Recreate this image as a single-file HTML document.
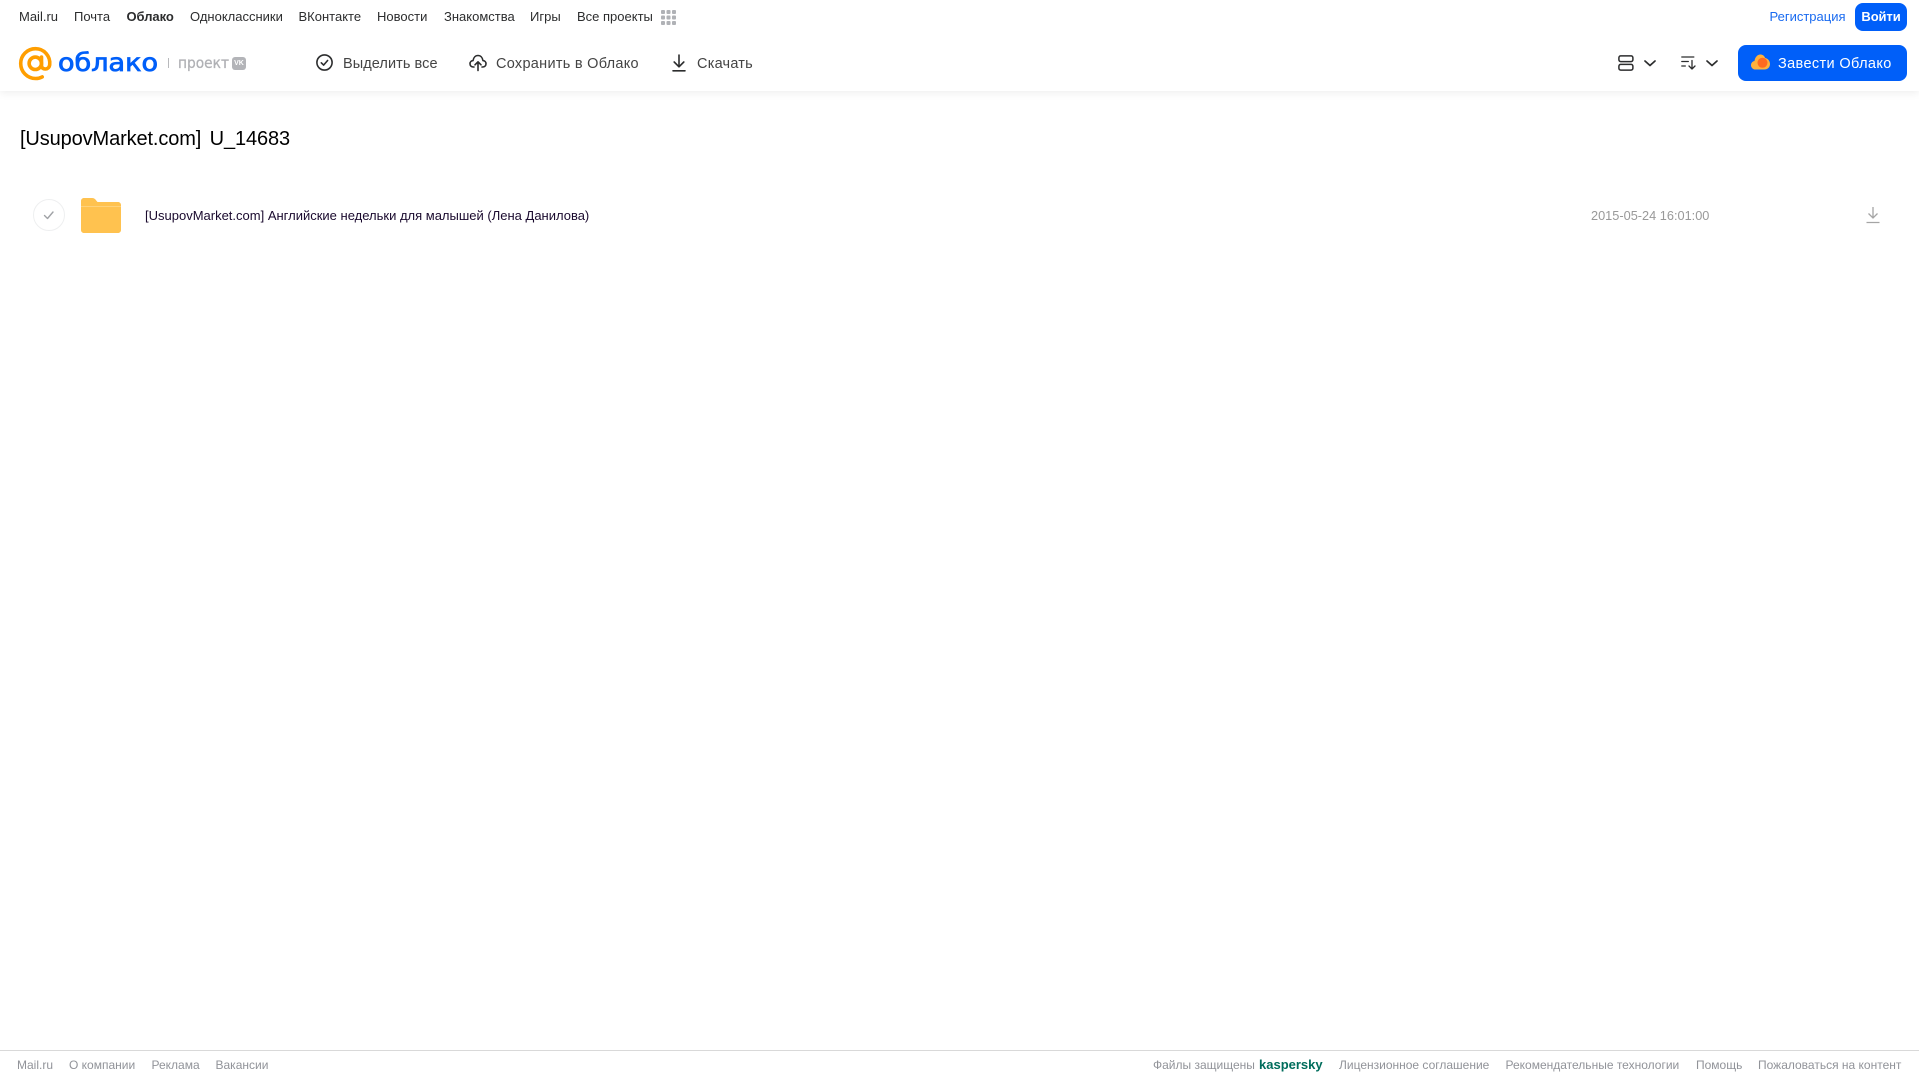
<!DOCTYPE html>
<html lang="ru">
<head>
<meta charset="utf-8">
<title>[UsupovMarket.com] U_14683</title>
<style>
html,body{margin:0;padding:0;background:#fff;}
body{position:relative;width:1919px;height:1079px;overflow:hidden;font-family:"Liberation Sans",sans-serif;}
.t{position:absolute;white-space:nowrap;line-height:20px;}
.n{top:7px;font-size:13px;color:#2c2d2e;}
.a{top:54px;font-size:14.5px;color:#444;letter-spacing:.28px;}
.f{top:1055px;font-size:12px;color:#919399;}
svg{position:absolute;overflow:visible;}
#hdr{position:absolute;left:0;top:0;width:1919px;height:91px;background:#fff;box-shadow:0 2px 8px rgba(0,0,0,.07);}
</style>
</head>
<body>
<div id="hdr"></div>

<span class="t n" style="left:19px">Mail.ru</span>
<span class="t n" style="left:74px">Почта</span>
<span class="t n" style="left:126.500px;font-weight:bold;letter-spacing:-.05px">Облако</span>
<span class="t n" style="left:190px">Одноклассники</span>
<span class="t n" style="left:298.500px">ВКонтакте</span>
<span class="t n" style="left:377px">Новости</span>
<span class="t n" style="left:444px">Знакомства</span>
<span class="t n" style="left:530px">Игры</span>
<span class="t n" style="left:577px">Все проекты</span>
<svg style="left:661px;top:10px" width="15" height="15" fill="#b0b2b6">
<rect x="0" y="0" width="4" height="4" rx="1"/><rect x="5.500" y="0" width="4" height="4" rx="1"/><rect x="11" y="0" width="4" height="4" rx="1"/>
<rect x="0" y="5.500" width="4" height="4" rx="1"/><rect x="5.500" y="5.500" width="4" height="4" rx="1"/><rect x="11" y="5.500" width="4" height="4" rx="1"/>
<rect x="0" y="11" width="4" height="4" rx="1"/><rect x="5.500" y="11" width="4" height="4" rx="1"/><rect x="11" y="11" width="4" height="4" rx="1"/>
</svg>

<span class="t" style="left:1769.500px;top:7px;font-size:13px;color:#1a6bf0">Регистрация</span>
<div style="position:absolute;left:1855px;top:3px;width:52px;height:28px;background:#005ff9;border-radius:8px"></div>
<span class="t" style="left:1855px;top:7px;width:52px;text-align:center;font-size:13px;font-weight:bold;color:#fff;letter-spacing:-.1px">Войти</span>

<!-- logo -->
<svg style="left:19px;top:47px" width="33" height="33" viewBox="0 0 33 33" fill="none">
<circle cx="16.300" cy="16.300" r="6.200" stroke="#ff9e00" stroke-width="3.600"/>
<path d="M22.500 10v8.500c0 4.800 7.600 4.800 8.200 -.8c.9 -8.500 -5.500 -16 -14.200 -16c-8.200 0 -14.800 6.600 -14.800 14.800c0 8.400 6.700 15 14.800 15c2.400 0 4.700 -.5 6.700 -1.600" stroke="#ff9e00" stroke-width="3.600" stroke-linecap="round"/>
</svg>
<svg style="left:57px;top:40px" width="102" height="40">
<text x="1" y="31" font-family="'DejaVu Sans',sans-serif" font-size="24.500" fill="#005ff9" stroke="#005ff9" stroke-width=".8" textLength="100" lengthAdjust="spacingAndGlyphs">облако</text>
</svg>
<div style="position:absolute;left:168px;top:58px;width:1px;height:10px;background:#b8b9bc"></div>
<svg style="left:178px;top:50px" width="54" height="24">
<text x="0" y="18" font-family="'DejaVu Sans',sans-serif" font-size="15.500" fill="#b0b1b5" stroke="#b0b1b5" stroke-width=".3" textLength="51" lengthAdjust="spacingAndGlyphs">проект</text>
</svg>
<div style="position:absolute;left:232px;top:57px;width:14px;height:13px;background:#b3b4b8;border-radius:3px;color:#fff;font-size:7px;line-height:13px;text-align:center;font-weight:bold">VK</div>

<!-- actions -->
<svg style="left:316px;top:54px" width="17" height="17" fill="none" stroke="#2c2d2e" stroke-width="1.600" stroke-linecap="round" stroke-linejoin="round">
<circle cx="8.500" cy="8.500" r="7.600"/><path d="M5.300 8.800l2.300 2.300l4 -4.600"/>
</svg>
<span class="t a" style="left:343px;letter-spacing:.07px">Выделить все</span>
<svg style="left:469px;top:54px" width="18" height="17" fill="none" stroke="#2c2d2e" stroke-width="1.600" stroke-linecap="round" stroke-linejoin="round">
<path d="M5 13H4.300C2.300 13 1 11.500 1 9.800C1 8 2.300 6.700 4 6.600C4.500 3.500 6.500 1.500 9 1.500C11.500 1.500 13.500 3.500 14 6.600C15.700 6.700 17 8 17 9.800C17 11.500 15.700 13 13.700 13H13"/>
<path d="M9 16.500V8M6 10.800L9 7.800L12 10.800"/>
</svg>
<span class="t a" style="left:496px">Сохранить в Облако</span>
<svg style="left:671px;top:54px" width="16" height="18" fill="none" stroke="#2c2d2e" stroke-width="1.600" stroke-linecap="round" stroke-linejoin="round">
<path d="M8 1v11.500M3.200 8l4.800 4.800L12.800 8M2 16.800h12"/>
</svg>
<span class="t a" style="left:697px;letter-spacing:.22px">Скачать</span>

<!-- right toolbar -->
<svg style="left:1618px;top:55px" width="15" height="16" fill="none" stroke="#2c2d2e" stroke-width="1.500">
<rect x=".9" y=".9" width="14" height="5.700" rx="1.800"/><rect x=".9" y="9.400" width="14" height="5.700" rx="1.800"/>
</svg>
<svg style="left:1644px;top:60px" width="12" height="7" fill="none" stroke="#2c2d2e" stroke-width="1.700" stroke-linecap="round" stroke-linejoin="round"><path d="M1 1l5 4.500L11 1"/></svg>
<svg style="left:1681px;top:56px" width="16" height="14" fill="none" stroke="#2c2d2e" stroke-width="1.300" stroke-linecap="round" stroke-linejoin="round">
<path d="M.8 1h12M.8 5.500h6.500M.8 10h3.500M11 4.500v8.500M8 10l3 3l3 -3"/>
</svg>
<svg style="left:1706px;top:60px" width="12" height="7" fill="none" stroke="#2c2d2e" stroke-width="1.700" stroke-linecap="round" stroke-linejoin="round"><path d="M1 1l5 4.500L11 1"/></svg>

<div style="position:absolute;left:1738px;top:45px;width:169px;height:36px;background:#005ff9;border-radius:8px"></div>
<svg style="left:1751px;top:54px" width="19" height="16">
<path d="M4.500 15.500C2 15.500 0 13.600 0 11.200C0 9 1.500 7.300 3.500 7C4 3.200 6.500 .5 9.300 .5C11.500 .5 13.300 1.800 14.200 4C16.800 4.500 19 6.800 19 10C19 13.300 16.500 15.500 13.500 15.500Z" fill="#ffb13d"/>
<circle cx="11.500" cy="8.800" r="5" fill="#ff6a1f"/>
</svg>
<span class="t" style="left:1778px;top:54px;font-size:14.500px;color:#fff;letter-spacing:.37px">Завести Облако</span>

<!-- content -->
<span class="t" style="left:20px;top:127px;font-size:20px;line-height:24px;color:#000;word-spacing:3px;letter-spacing:-.12px">[UsupovMarket.com] U_14683</span>

<svg style="left:33px;top:199px" width="32" height="32" fill="none">
<circle cx="16" cy="16" r="15.500" stroke="#eeeff0"/>
<path d="M11.500 16.500l3 3l5.500 -6.500" stroke="#a0a2a6" stroke-width="1.400" stroke-linecap="round" stroke-linejoin="round"/>
</svg>
<svg style="left:81px;top:198px" width="40" height="35">
<path d="M0 3C0 1.300 1.300 0 3 0H11C13 0 14 .8 15 2.200L16.500 4H37C38.700 4 40 5.300 40 7V32C40 33.700 38.700 35 37 35H3C1.300 35 0 33.700 0 32Z" fill="#ffc24f"/>
<rect x="0" y="8" width="40" height="1" fill="#ffd27a"/>
</svg>
<span class="t" style="left:145px;top:206px;font-size:13px;color:#1a0a2e">[UsupovMarket.com] Английские недельки для малышей (Лена Данилова)</span>
<span class="t" style="left:1591px;top:206px;font-size:12.750px;color:#999">2015-05-24 16:01:00</span>
<svg style="left:1866px;top:207px" width="14" height="17" fill="none" stroke="#a5a5a5" stroke-width="1.300">
<path d="M7 0v11M2.500 6.500L7 11l4.500 -4.500M.5 15.500h13"/>
</svg>

<!-- footer -->
<div style="position:absolute;left:0;top:1050px;width:1919px;height:1px;background:#d9d9d9"></div>
<span class="t f" style="left:17px">Mail.ru</span>
<span class="t f" style="left:69px">О компании</span>
<span class="t f" style="left:151.500px">Реклама</span>
<span class="t f" style="left:215.500px">Вакансии</span>
<span class="t f" style="left:1153px">Файлы защищены</span>
<span class="t f" style="left:1259px;font-size:13px;font-weight:bold;color:#006d5c">kaspersky</span>
<span class="t f" style="left:1339px">Лицензионное соглашение</span>
<span class="t f" style="left:1505.500px">Рекомендательные технологии</span>
<span class="t f" style="left:1696px">Помощь</span>
<span class="t f" style="left:1758px">Пожаловаться на контент</span>
</body>
</html>
